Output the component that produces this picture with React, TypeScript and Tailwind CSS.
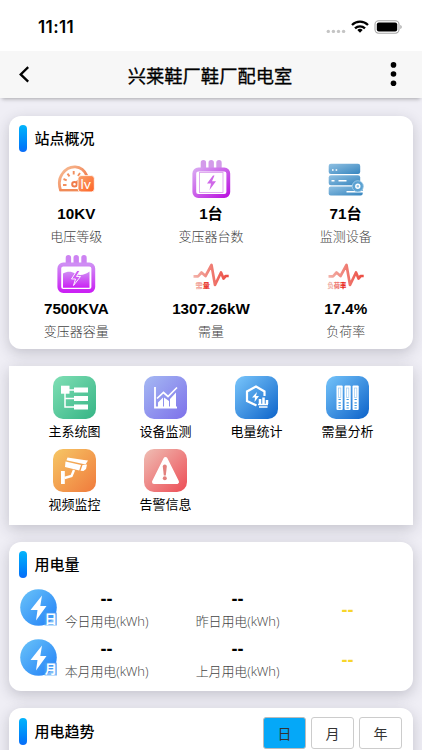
import React from 'react';

const sans = "font-['Liberation_Sans','Noto_Sans_CJK_SC',sans-serif]";
const cardShadow = 'shadow-[0_4px_14px_rgba(40,40,60,0.22)]';

function StatusBar() {
  return (
    <div className="flex h-[51px] items-start justify-between bg-white pl-[38px] pr-[20px] pt-[18px]">
      <span className="font-['Inter',sans-serif] text-[17px] font-semibold leading-[18px] tracking-[0.4px]">11:11</span>
      <div className="flex h-[18px] items-center">
        <svg width="20" height="18" viewBox="0 0 20 18" fill="#c4c4c4">
          <circle cx="2.3" cy="13.4" r="1.7" />
          <circle cx="7.4" cy="13.4" r="1.7" />
          <circle cx="12.5" cy="13.4" r="1.7" />
          <circle cx="17.6" cy="13.4" r="1.7" />
        </svg>
        <svg className="ml-[5px]" width="18" height="18" viewBox="0 0 18 18" fill="none" stroke="#000" strokeWidth="2.3">
          <path d="M1 7a11.4 11.4 0 0 1 16 0" />
          <path d="M4 10.3a7.2 7.2 0 0 1 10 0" />
          <path d="M9 14.8 6.3 12.1a3.9 3.9 0 0 1 5.4 0Z" fill="#000" stroke="none" />
        </svg>
        <svg className="ml-[5px]" width="28" height="18" viewBox="0 0 28 18">
          <rect x="1" y="2.8" width="24" height="12.4" rx="3.6" fill="none" stroke="#a8a8a8" strokeWidth="1.1" />
          <rect x="2.8" y="4.6" width="20.4" height="8.8" rx="2" />
          <path d="M26.3 7v4c.9-.3 1.4-1.1 1.4-2s-.5-1.7-1.4-2Z" fill="#a8a8a8" />
        </svg>
      </div>
    </div>
  );
}

function NavBar() {
  return (
    <div className="flex h-[47px] items-center justify-between bg-[#f7f7f7] pl-[18px] pr-[20px] shadow-[0_3px_4px_-2px_rgba(0,0,0,0.3)]">
      <svg width="18" height="20" viewBox="0 0 18 20" fill="none" stroke="#000" strokeWidth="2.3">
        <path d="M10.2 2.2 2.7 9.400l7.500 7.200" />
      </svg>
      <h1 className="font-['Noto_Sans_CJK_SC',sans-serif] text-[18.3px] font-normal leading-[24px] [-webkit-text-stroke:0.3px_#000]">兴莱鞋厂鞋厂配电室</h1>
      <svg width="18" height="26" viewBox="0 0 18 26">
        <circle cx="9.500" cy="2.9" r="2.8" />
        <circle cx="9.500" cy="12" r="2.8" />
        <circle cx="9.500" cy="21.2" r="2.8" />
      </svg>
    </div>
  );
}

function Heading({ children }: { children: React.ReactNode }) {
  return (
    <div className="flex items-center gap-2">
      <span className="h-[27px] w-[7.5px] rounded-full bg-gradient-to-b from-[#07b4fb] to-[#0b6cf8]" />
      <h2 className="font-['Noto_Sans_CJK_SC',sans-serif] text-[15px] font-medium leading-[28px]">{children}</h2>
    </div>
  );
}

function GaugeIcon() {
  return (
    <svg width="40" height="40" viewBox="0 0 40 40">
      <defs>
        <linearGradient id="gauge" x1="0" y1="0" x2="1" y2="1">
          <stop offset="0" stopColor="#f8c39c" />
          <stop offset="1" stopColor="#ee6433" />
        </linearGradient>
        <linearGradient id="lv" x1="0" y1="0" x2="1" y2="1">
          <stop offset="0" stopColor="#f9a36f" />
          <stop offset="1" stopColor="#ff6122" />
        </linearGradient>
      </defs>
      <path d="M4.600 31.500C2.500 25 3 19 6.500 14.500 13 5.500 26 5 31 17" fill="none" stroke="url(#gauge)" strokeWidth="2.800" />
      <path d="M3.500 31.200h20" stroke="#f08a57" strokeWidth="2.400" />
      <g stroke="#f2905f" strokeWidth="1.900">
        <path d="M7 26h3.500M7.500 20l3.200 1.300M11.500 14.600l2 2.800M17.700 12v3.600M24 14l-2 3M28 17.500l-2 2" />
        <path d="m19 25 7-6.500" strokeWidth="2.400" />
      </g>
      <circle cx="18.500" cy="25.200" r="2.300" fill="#fff" stroke="#f07c4a" strokeWidth="2" />
      <rect x="22" y="16.600" width="16.300" height="16.300" rx="3" fill="url(#lv)" stroke="#fff" strokeWidth=".8" />
      <text x="24.500" y="30" fontSize="14" fill="#fff" fontFamily="Lato, sans-serif">lv</text>
    </svg>
  );
}

function TransformerIcon({ filled = false }: { filled?: boolean }) {
  return (
    <svg width="40" height="40" viewBox="0 0 40 40">
      <defs>
        <linearGradient id="coil" x1="0" y1="0" x2="1" y2="1">
          <stop offset="0" stopColor="#d9a6f2" />
          <stop offset="1" stopColor="#bb14e0" />
        </linearGradient>
        <linearGradient id="tank" x1="0" y1="0" x2="0" y2="1">
          <stop offset="0" stopColor="#cf8df4" />
          <stop offset="1" stopColor="#cb22f4" />
        </linearGradient>
      </defs>
      <g fill={filled ? '#cd83f2' : '#d39bea'}>
        <rect x="9.700" y="1" width="5.400" height="12" rx="2.700" />
        <rect x="17.500" y="1" width="5.400" height="12" rx="2.700" />
        <rect x="25.300" y="1" width="5.400" height="12" rx="2.700" />
      </g>
      <rect x="3.300" y="10.500" width="34" height="26.500" rx="4" fill="#fff" stroke={filled ? 'url(#tank)' : 'url(#coil)'} strokeWidth="3.800" />
      {filled ? (
        <>
          <path d="M7 19.500c4-2 8-2.500 12 0s10 1.500 14.500-2v16.200H7Z" fill="url(#tank)" />
          <path d="m21 16.500-5.500 8.500h4l-2 6.500 7-9h-4l3.500-6Z" fill="#cf5cf3" stroke="#fff" strokeWidth=".9" />
        </>
      ) : (
        <>
          <rect x="8.500" y="13.500" width="23.500" height="20" fill="none" stroke="#dda4ee" strokeWidth=".9" />
          <path d="m22 16.500-6 8h4l-1.500 6.500 6.500-8.700h-4l2.500-5.800Z" fill="#cf68e8" />
        </>
      )}
    </svg>
  );
}

function ServerIcon() {
  return (
    <svg width="40" height="40" viewBox="0 0 40 40">
      <defs>
        <linearGradient id="server" x1="0" y1="0" x2="1" y2="1">
          <stop offset="0" stopColor="#8fc0e2" />
          <stop offset="1" stopColor="#3685bf" />
        </linearGradient>
      </defs>
      <g fill="url(#server)">
        <rect x="2.700" y="4.800" width="31.500" height="10.200" rx="2.200" />
        <rect x="2.700" y="16.300" width="31.500" height="10" rx="2.200" />
        <rect x="2.700" y="27.500" width="34" height="9" rx="2" />
      </g>
      <path d="M6 11h1.600M9.600 11h1.600M5.500 21.800h3M12.500 21.800h8M20.500 32.700h16.500" stroke="#fff" strokeWidth="1.500" />
      <circle cx="31.800" cy="27.300" r="5.600" fill="#5ca2d2" stroke="#a8d0ea" strokeWidth=".8" />
      <circle cx="31.800" cy="27.300" r="2" fill="#8fc1e2" stroke="#fff" strokeWidth="1.400" />
    </svg>
  );
}

function PulseIcon({ label }: { label: string }) {
  // each character gets a deeper red than the one before it
  const reds = label.length === 2 ? ['#f2a79d', '#ea3f36'] : ['#f0b4ac', '#ee766f', '#e92720'];
  return (
    <svg width="40" height="40" viewBox="0 0 40 40">
      <defs>
        <linearGradient id="pulse" x1="0" y1="0" x2="1" y2="0">
          <stop offset="0" stopColor="#f3b3aa" />
          <stop offset="1" stopColor="#ec493f" />
        </linearGradient>
      </defs>
      <path d="M2.500 22.300H7l3.500-3.800 4 3.500L20.500 11 24 31l6-12.500 2.500 6 2.200-2.500h3" fill="none" stroke="url(#pulse)" strokeWidth="2.700" strokeLinejoin="round" />
      <text x={label.length === 2 ? 4.5 : 1.5} y="33.500" fontSize={label.length === 2 ? 7.2 : 6.3} fontWeight="900" fontFamily="'Noto Sans CJK SC', sans-serif">
        {label.split('').map((c, i) => (
          <tspan key={c} fill={reds[i]}>{c}</tspan>
        ))}
      </text>
    </svg>
  );
}

const stats = [
  { icon: <GaugeIcon />, value: '10KV', label: '电压等级' },
  { icon: <TransformerIcon />, value: '1台', label: '变压器台数' },
  { icon: <ServerIcon />, value: '71台', label: '监测设备' },
  { icon: <TransformerIcon filled />, value: '7500KVA', label: '变压器容量' },
  { icon: <PulseIcon label="需量" />, value: '1307.26kW', label: '需量' },
  { icon: <PulseIcon label="负荷率" />, value: '17.4%', label: '负荷率' },
];

function Tile({ id, from, to, children }: { id: string; from: string; to: string; children: React.ReactNode }) {
  return (
    <svg width="43" height="43" viewBox="0 0 43 43">
      <defs>
        <linearGradient id={id} x1="0" y1="0" x2="1" y2="1">
          <stop offset="0" stopColor={from} />
          <stop offset="1" stopColor={to} />
        </linearGradient>
      </defs>
      <rect width="43" height="43" rx="10" fill={`url(#${id})`} />
      {children}
    </svg>
  );
}

const shortcuts = [
  {
    label: '主系统图',
    icon: (
      <Tile id="t1" from="#80dfb5" to="#36b485">
        <g fill="#fff">
          <rect x="8" y="9.700" width="8.500" height="8" />
          <rect x="21" y="11.500" width="14" height="5" />
          <rect x="21" y="20" width="14" height="5" />
          <rect x="21" y="28.500" width="14" height="5" />
        </g>
        <path d="M16 14h6M12 17v14h10M12 22.500h10" fill="none" stroke="#fff" strokeWidth="1.500" />
      </Tile>
    ),
  },
  {
    label: '设备监测',
    icon: (
      <Tile id="t2" from="#a5b9f3" to="#7d70ea">
        <path d="M11 11v20.500h22" fill="none" stroke="#fff" strokeWidth="1.800" />
        <path d="m13 22.500 6.500-6 4.500 4 9-9" fill="none" stroke="#fff" strokeWidth="1.700" />
        <path d="M14 26.500 19 21.500v9.500h-5ZM20 21.500l5 3.500v6h-5ZM26 23l6-6.500V31h-6Z" fill="#fff" />
      </Tile>
    ),
  },
  {
    label: '电量统计',
    icon: (
      <Tile id="t3" from="#7ac6fb" to="#0d64ca">
        <path d="M21.500 29.500 12 25v-9.500l9-5 8.500 5V20" fill="none" stroke="#fff" strokeWidth="2.200" />
        <path d="m22 16-5 5.500h3L19.500 26l4.500-6h-3Z" fill="#fff" />
        <path d="M25 23v5M28.500 21.500v6.500M32 24v4" stroke="#fff" strokeWidth="2.500" />
        <path d="M23 28.500h10M24 31h8.500" stroke="#fff" strokeWidth="1.400" />
      </Tile>
    ),
  },
  {
    label: '需量分析',
    icon: (
      <Tile id="t4" from="#75c4fa" to="#0c62c9">
        {[10.5, 18.5, 26.5].map((x) => (
          <g key={x} transform={`translate(${x} 9.500)`}>
            <rect width="6.200" height="24.500" rx="1" fill="#fff" />
            <rect x="1.900" y="2.500" width="2.400" height="9.500" fill="none" stroke="#9ccbf2" strokeWidth=".7" />
            <path d="M2 14h2.300M2 17.300h2.300M2 20h2.300M2 22.500h2.300" stroke="#3f99e4" strokeWidth="1.200" />
          </g>
        ))}
      </Tile>
    ),
  },
  {
    label: '视频监控',
    icon: (
      <Tile id="t5" from="#f6c765" to="#f07a3c">
        <g fill="#fff">
          <path d="M14.500 8.500 31 11l4 .5-2.500 4-19-4.200Z" />
          <path d="m12.500 12.500 15.500 3.500-1.800 5.500-14.200-3.500Z" />
          <path d="m29.500 16 4.500-.5-1 4.500-2.500 2-3-.3Z" />
          <path d="M8 22h3.800v13H8Z" />
        </g>
        <path d="M11.500 29l7-2 2.500-6" fill="none" stroke="#fff" strokeWidth="2.400" />
      </Tile>
    ),
  },
  {
    label: '告警信息',
    icon: (
      <Tile id="t6" from="#efbeb4" to="#ed4c55">
        <path d="M21.500 10 33 33H10Z" fill="#fff" stroke="#fff" strokeWidth="4" strokeLinejoin="round" />
        <path d="M18.800 17.500a2 2 0 0 1 4 0l-1 9h-2Z" fill="#e2817e" />
        <circle cx="20.800" cy="29.300" r="2" fill="#e2817e" />
      </Tile>
    ),
  },
];

function EnergyIcon({ mark }: { mark: string }) {
  return (
    <svg className="shrink-0" width="38" height="38" viewBox="0 0 38 38">
      <defs>
        <linearGradient id="energy" x1="0" y1="0" x2="1" y2="1">
          <stop offset="0" stopColor="#6bc4f9" />
          <stop offset="1" stopColor="#207ff7" />
        </linearGradient>
      </defs>
      <circle cx="18.500" cy="18.500" r="18.300" fill="url(#energy)" />
      <path d="M22 6.500 10.500 21h7L16 31.500 26.500 17h-6.200Z" fill="#fff" />
      <rect x="24.500" y="23.500" width="12.500" height="13" fill="#4a9ff5" opacity=".7" />
      <text x="24.800" y="35" fontSize="12" fontWeight="700" fill="#fff" fontFamily="'Noto Sans CJK SC', sans-serif">{mark}</text>
    </svg>
  );
}

const usage = [
  { mark: '日', current: '今日用电(kWh)', previous: '昨日用电(kWh)' },
  { mark: '月', current: '本月用电(kWh)', previous: '上月用电(kWh)' },
];

function UsageValue({ label }: { label: string }) {
  return (
    <div className="w-[131px] text-center">
      <div className={`${sans} h-[22px] text-[18px] font-bold leading-[22px]`}>--</div>
      <div className="font-['Open_Sans','Noto_Sans_CJK_SC',sans-serif] text-[13px] font-light leading-[22px] tracking-[-0.1px] text-[#444]">{label}</div>
    </div>
  );
}

export default function App() {
  return (
    <div className={`${sans} h-[750px] w-full overflow-hidden bg-[#efeef5] text-black`}>
      <StatusBar />
      <NavBar />

      <main className="flex flex-col px-[9px] pt-[18px]">
        <section className={`h-[233px] rounded-[12px] bg-white ${cardShadow}`}>
          <div className="pl-[10px] pt-[8px]">
            <Heading>站点概况</Heading>
          </div>
          <div className="mt-[7px] grid grid-cols-3">
            {stats.map((s) => (
              <div key={s.label} className="flex h-[95px] flex-col items-center">
                {s.icon}
                <div className="h-[26px] text-[15.200px] font-bold leading-[29px]">{s.value}</div>
                <div className="font-['Noto_Sans_CJK_SC',sans-serif] text-[13px] font-light leading-[21px] text-[#444]">{s.label}</div>
              </div>
            ))}
          </div>
        </section>

        <section className={`mt-[17px] grid h-[159px] grid-cols-4 content-start bg-white px-[20px] pt-[10px] ${cardShadow}`}>
          {shortcuts.map((s) => (
            <div key={s.label} className="flex h-[73px] flex-col items-center">
              {s.icon}
              <span className="font-['Noto_Sans_CJK_SC',sans-serif] text-[13px] leading-[24px]">{s.label}</span>
            </div>
          ))}
        </section>

        <section className={`mt-[17px] h-[149px] rounded-[12px] bg-white pt-[8px] ${cardShadow}`}>
          <div className="pl-[10px]">
            <Heading>用电量</Heading>
          </div>
          <div className="mt-[10px]">
            {usage.map((u) => (
              <div key={u.mark} className="flex h-[49.500px] items-start pl-[11px]">
                <div className="pt-[1px]">
                  <EnergyIcon mark={u.mark} />
                </div>
                <div className="-ml-[17px] flex">
                  <UsageValue label={u.current} />
                  <UsageValue label={u.previous} />
                </div>
                <div className="w-[89px] pt-[12px] text-center text-[18px] font-bold leading-[21px] text-[#f7d52b]">--</div>
              </div>
            ))}
          </div>
        </section>

        <section className={`mt-[17px] flex h-[200px] items-start justify-between rounded-[12px] bg-white pl-[10px] pr-[11px] pt-[9px] ${cardShadow}`}>
          <Heading>用电趋势</Heading>
          <div className="flex gap-[5px] font-['Noto_Sans_CJK_SC',sans-serif] text-[14px] text-[#333]">
            <button className="h-[32px] w-[43px] rounded-[3px] border border-[#bbb] bg-[#05a8f8]">日</button>
            <button className="h-[32px] w-[43px] rounded-[3px] border border-[#ccc] bg-white">月</button>
            <button className="h-[32px] w-[43px] rounded-[3px] border border-[#ccc] bg-white">年</button>
          </div>
        </section>
      </main>
    </div>
  );
}
